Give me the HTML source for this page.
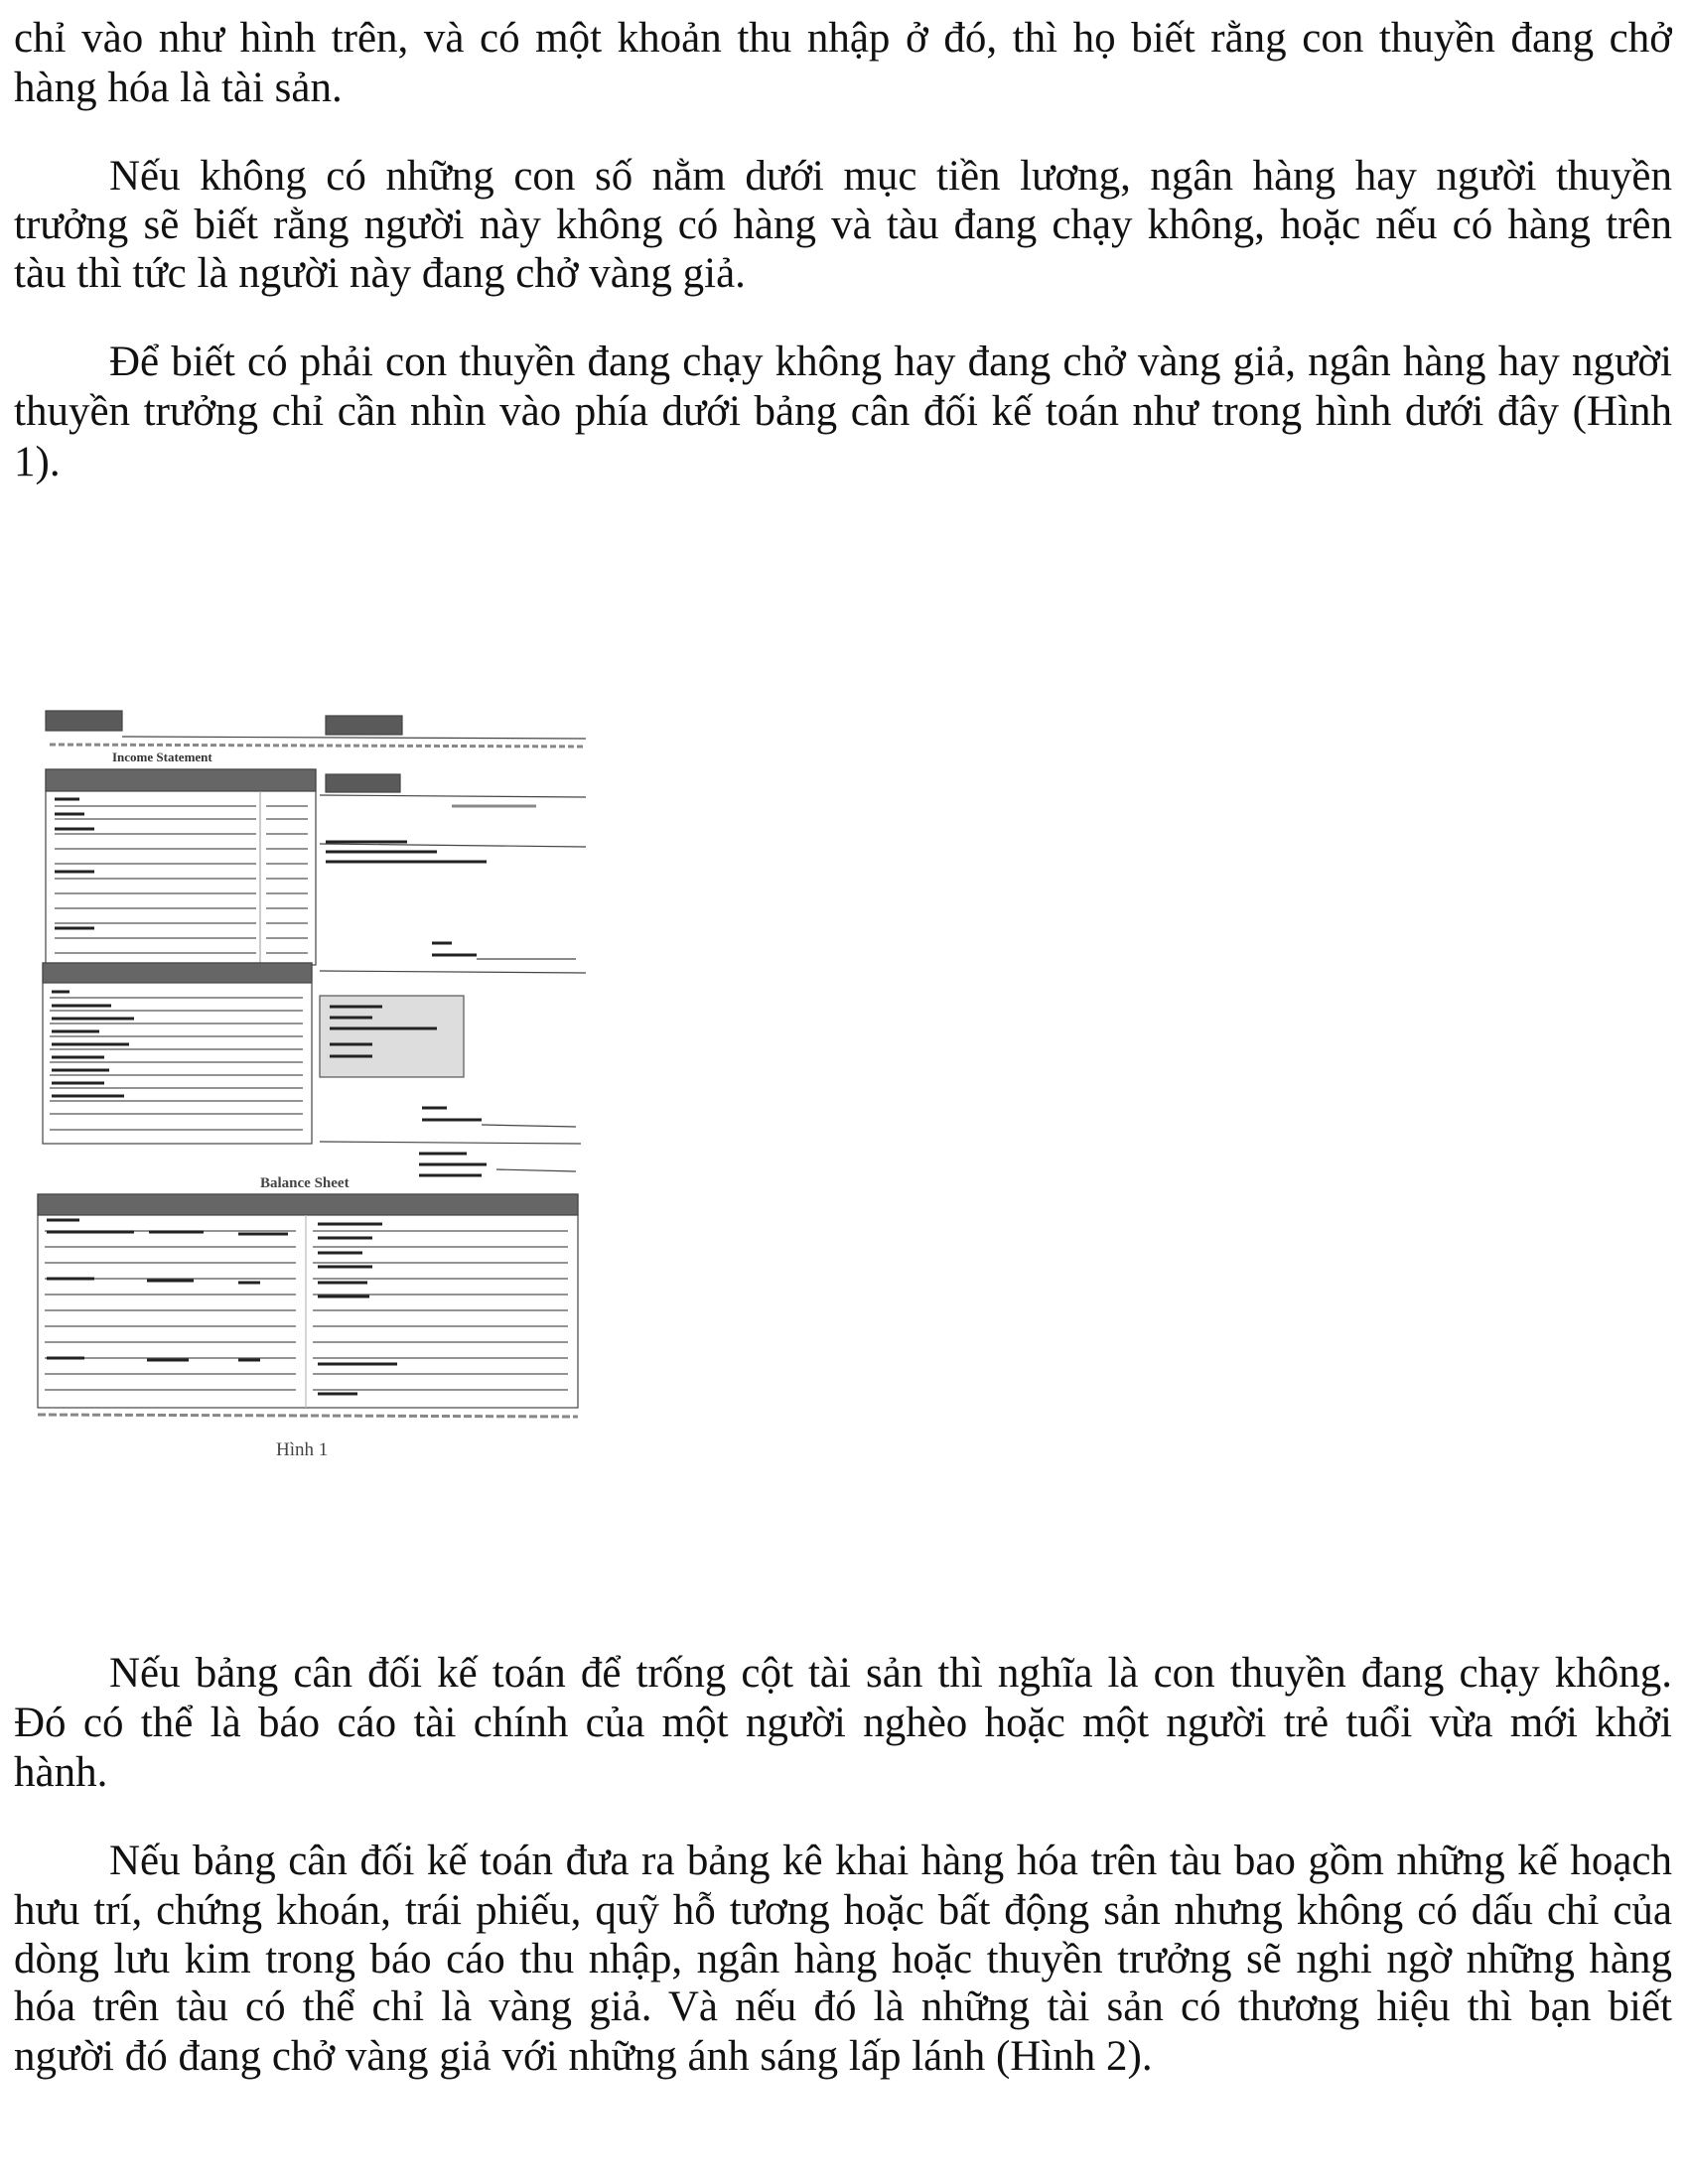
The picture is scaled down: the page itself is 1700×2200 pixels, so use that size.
<!DOCTYPE html>
<html><head><meta charset="utf-8">
<style>
html,body{margin:0;padding:0;background:#fff;}
body{width:1700px;height:2200px;position:relative;overflow:hidden;font-family:"Liberation Serif","DejaVu Serif",serif;color:#111;}
.l{position:absolute;left:14px;width:1670px;font-size:43px;line-height:48px;white-space:nowrap;}
.j{text-align:justify;text-align-last:justify;white-space:normal;height:48px;overflow:hidden;}
svg{position:absolute;left:0;top:0;}
</style></head><body>
<div class="l j" style="top:15px">chỉ vào như hình trên, và có một khoản thu nhập ở đó, thì họ biết rằng con thuyền đang chở</div>
<div class="l" style="top:65px">hàng hóa là tài sản.</div>

<div class="l j" style="top:154px;left:110px;width:1574px">Nếu không có những con số nằm dưới mục tiền lương, ngân hàng hay người thuyền</div>
<div class="l j" style="top:203px">trưởng sẽ biết rằng người này không có hàng và tàu đang chạy không, hoặc nếu có hàng trên</div>
<div class="l" style="top:252px">tàu thì tức là người này đang chở vàng giả.</div>

<div class="l j" style="top:341px;left:110px;width:1574px">Để biết có phải con thuyền đang chạy không hay đang chở vàng giả, ngân hàng hay người</div>
<div class="l j" style="top:391px">thuyền trưởng chỉ cần nhìn vào phía dưới bảng cân đối kế toán như trong hình dưới đây (Hình</div>
<div class="l" style="top:442px">1).</div>

<div class="l j" style="top:1662px;left:110px;width:1574px">Nếu bảng cân đối kế toán để trống cột tài sản thì nghĩa là con thuyền đang chạy không.</div>
<div class="l j" style="top:1712px">Đó có thể là báo cáo tài chính của một người nghèo hoặc một người trẻ tuổi vừa mới khởi</div>
<div class="l" style="top:1762px">hành.</div>

<div class="l j" style="top:1851px;left:110px;width:1574px">Nếu bảng cân đối kế toán đưa ra bảng kê khai hàng hóa trên tàu bao gồm những kế hoạch</div>
<div class="l j" style="top:1901px">hưu trí, chứng khoán, trái phiếu, quỹ hỗ tương hoặc bất động sản nhưng không có dấu chỉ của</div>
<div class="l j" style="top:1950px">dòng lưu kim trong báo cáo thu nhập, ngân hàng hoặc thuyền trưởng sẽ nghi ngờ những hàng</div>
<div class="l j" style="top:1998px">hóa trên tàu có thể chỉ là vàng giả. Và nếu đó là những tài sản có thương hiệu thì bạn biết</div>
<div class="l" style="top:2048px">người đó đang chở vàng giả với những ánh sáng lấp lánh (Hình 2).</div>

<svg width="700" height="1500" viewBox="0 0 700 1500">
<g stroke="#444" stroke-width="1.2" fill="none">
<rect x="46" y="716" width="77" height="20" fill="#5a5a5a"/>
<rect x="328" y="721" width="77" height="19" fill="#5a5a5a"/>
<line x1="123" y1="742" x2="590" y2="744"/>
<line x1="50" y1="750" x2="590" y2="752" stroke="#888" stroke-width="3" stroke-dasharray="6 3"/>
<rect x="46" y="775" width="272" height="197"/>
<rect x="46" y="775" width="272" height="22" fill="#666"/>
<line x1="262" y1="797" x2="262" y2="970" stroke="#aaa"/>
<g stroke="#555">
<line x1="55" y1="812" x2="258" y2="812"/><line x1="268" y1="812" x2="310" y2="812"/>
<line x1="55" y1="825" x2="258" y2="825"/><line x1="268" y1="825" x2="310" y2="825"/>
<line x1="55" y1="840" x2="258" y2="840"/><line x1="268" y1="840" x2="310" y2="840"/>
<line x1="55" y1="855" x2="258" y2="855"/><line x1="268" y1="855" x2="310" y2="855"/>
<line x1="55" y1="870" x2="258" y2="870"/><line x1="268" y1="870" x2="310" y2="870"/>
<line x1="55" y1="885" x2="258" y2="885"/><line x1="268" y1="885" x2="310" y2="885"/>
<line x1="55" y1="900" x2="258" y2="900"/><line x1="268" y1="900" x2="310" y2="900"/>
<line x1="55" y1="915" x2="258" y2="915"/><line x1="268" y1="915" x2="310" y2="915"/>
<line x1="55" y1="930" x2="258" y2="930"/><line x1="268" y1="930" x2="310" y2="930"/>
<line x1="55" y1="945" x2="258" y2="945"/><line x1="268" y1="945" x2="310" y2="945"/>
<line x1="55" y1="960" x2="258" y2="960"/><line x1="268" y1="960" x2="310" y2="960"/>
</g>
<rect x="43" y="970" width="271" height="182"/>
<rect x="43" y="970" width="271" height="20" fill="#666"/>
<g stroke="#555">
<line x1="50" y1="1005" x2="305" y2="1005"/><line x1="50" y1="1018" x2="305" y2="1018"/>
<line x1="50" y1="1031" x2="305" y2="1031"/><line x1="50" y1="1044" x2="305" y2="1044"/>
<line x1="50" y1="1057" x2="305" y2="1057"/><line x1="50" y1="1070" x2="305" y2="1070"/>
<line x1="50" y1="1083" x2="305" y2="1083"/><line x1="50" y1="1096" x2="305" y2="1096"/>
<line x1="50" y1="1109" x2="305" y2="1109"/><line x1="50" y1="1122" x2="305" y2="1122"/>
<line x1="50" y1="1138" x2="305" y2="1138"/>
</g>
<g stroke="#222" stroke-width="3">
<line x1="55" y1="805" x2="80" y2="805"/><line x1="55" y1="820" x2="85" y2="820"/><line x1="55" y1="835" x2="95" y2="835"/>
<line x1="55" y1="878" x2="95" y2="878"/><line x1="55" y1="935" x2="95" y2="935"/>
<line x1="52" y1="999" x2="70" y2="999"/><line x1="52" y1="1013" x2="112" y2="1013"/><line x1="52" y1="1026" x2="135" y2="1026"/>
<line x1="52" y1="1039" x2="100" y2="1039"/><line x1="52" y1="1052" x2="130" y2="1052"/><line x1="52" y1="1065" x2="105" y2="1065"/>
<line x1="52" y1="1078" x2="110" y2="1078"/><line x1="52" y1="1091" x2="105" y2="1091"/><line x1="52" y1="1104" x2="125" y2="1104"/>
</g>
<rect x="328" y="780" width="75" height="18" fill="#5a5a5a"/>
<line x1="322" y1="801" x2="590" y2="803"/>
<line x1="455" y1="812" x2="540" y2="812" stroke="#888" stroke-width="3"/>
<line x1="322" y1="850" x2="590" y2="853"/>
<g stroke="#222" stroke-width="3"><line x1="328" y1="848" x2="410" y2="848"/><line x1="328" y1="858" x2="440" y2="858"/><line x1="328" y1="868" x2="490" y2="868"/>
<line x1="435" y1="950" x2="455" y2="950"/><line x1="435" y1="962" x2="480" y2="962"/>
<line x1="425" y1="1116" x2="450" y2="1116"/><line x1="425" y1="1128" x2="485" y2="1128"/>
<line x1="422" y1="1162" x2="470" y2="1162"/><line x1="422" y1="1173" x2="490" y2="1173"/><line x1="422" y1="1184" x2="485" y2="1184"/></g>
<line x1="480" y1="966" x2="580" y2="966"/>
<line x1="322" y1="978" x2="590" y2="980"/>
<rect x="322" y="1003" width="145" height="82" fill="#ddd" stroke="#555"/>
<g stroke="#222" stroke-width="3"><line x1="332" y1="1014" x2="385" y2="1014"/><line x1="332" y1="1025" x2="375" y2="1025"/><line x1="332" y1="1036" x2="440" y2="1036"/><line x1="332" y1="1052" x2="375" y2="1052"/><line x1="332" y1="1064" x2="375" y2="1064"/></g>
<line x1="485" y1="1133" x2="580" y2="1135"/>
<line x1="322" y1="1150" x2="585" y2="1152"/>
<line x1="500" y1="1178" x2="580" y2="1180"/>
<rect x="38" y="1203" width="544" height="215"/>
<rect x="38" y="1203" width="544" height="21" fill="#666"/>
<line x1="308" y1="1224" x2="308" y2="1418" stroke="#bbb"/>
<g stroke="#555">
<line x1="45" y1="1240" x2="298" y2="1240"/><line x1="45" y1="1256" x2="298" y2="1256"/><line x1="45" y1="1272" x2="298" y2="1272"/>
<line x1="45" y1="1288" x2="298" y2="1288"/><line x1="45" y1="1304" x2="298" y2="1304"/><line x1="45" y1="1320" x2="298" y2="1320"/>
<line x1="45" y1="1336" x2="298" y2="1336"/><line x1="45" y1="1352" x2="298" y2="1352"/><line x1="45" y1="1368" x2="298" y2="1368"/>
<line x1="45" y1="1384" x2="298" y2="1384"/><line x1="45" y1="1400" x2="298" y2="1400"/>
<line x1="315" y1="1240" x2="572" y2="1240"/><line x1="315" y1="1256" x2="572" y2="1256"/><line x1="315" y1="1272" x2="572" y2="1272"/>
<line x1="315" y1="1288" x2="572" y2="1288"/><line x1="315" y1="1304" x2="572" y2="1304"/><line x1="315" y1="1320" x2="572" y2="1320"/>
<line x1="315" y1="1336" x2="572" y2="1336"/><line x1="315" y1="1352" x2="572" y2="1352"/><line x1="315" y1="1368" x2="572" y2="1368"/>
<line x1="315" y1="1384" x2="572" y2="1384"/><line x1="315" y1="1400" x2="572" y2="1400"/>
</g>
<g stroke="#222" stroke-width="3">
<line x1="47" y1="1229" x2="80" y2="1229"/><line x1="47" y1="1241" x2="135" y2="1241"/><line x1="150" y1="1241" x2="205" y2="1241"/><line x1="240" y1="1243" x2="290" y2="1243"/>
<line x1="47" y1="1288" x2="95" y2="1288"/><line x1="148" y1="1290" x2="195" y2="1290"/><line x1="240" y1="1292" x2="262" y2="1292"/>
<line x1="47" y1="1368" x2="85" y2="1368"/><line x1="148" y1="1370" x2="190" y2="1370"/><line x1="240" y1="1370" x2="262" y2="1370"/>
<line x1="320" y1="1233" x2="385" y2="1233"/><line x1="320" y1="1247" x2="375" y2="1247"/><line x1="320" y1="1262" x2="365" y2="1262"/>
<line x1="320" y1="1276" x2="375" y2="1276"/><line x1="320" y1="1292" x2="370" y2="1292"/><line x1="320" y1="1306" x2="372" y2="1306"/>
<line x1="320" y1="1374" x2="400" y2="1374"/><line x1="320" y1="1404" x2="360" y2="1404"/>
</g>
<line x1="38" y1="1425" x2="582" y2="1427" stroke="#888" stroke-width="3" stroke-dasharray="8 3"/>
</g>
<text x="113" y="767" font-family="Liberation Serif" font-size="13" font-weight="bold" fill="#333">Income Statement</text>
<text x="262" y="1196" font-family="Liberation Serif" font-size="15" font-weight="bold" fill="#444">Balance Sheet</text>
<text x="278" y="1466" font-family="Liberation Serif" font-size="19" fill="#444">Hình 1</text>
</svg>
</body></html>
